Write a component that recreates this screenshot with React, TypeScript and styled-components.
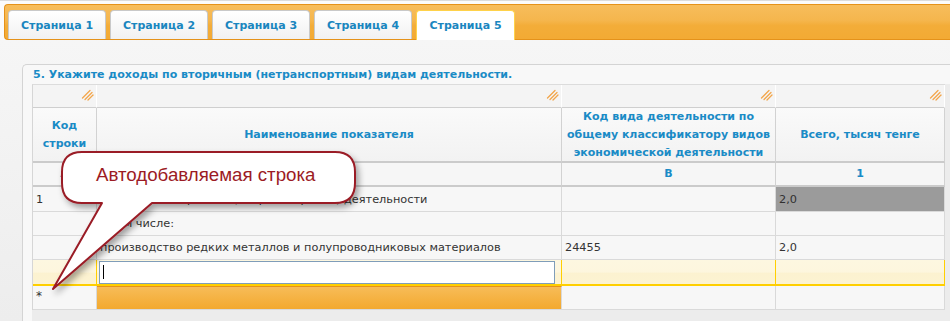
import React from 'react';
import styled, { createGlobalStyle, css } from 'styled-components';

const GlobalStyle = createGlobalStyle`
    html, body {
        margin: 0;
        padding: 0;
        background: #efefef;
    }
    body {
        font-family: 'DejaVu Sans', Verdana, sans-serif;
    }
`;

const Page = styled.div`
    position: relative;
    width: 950px;
    height: 321px;
    overflow: hidden;
    display: flex;
    flex-direction: column;
    background: #fbfbfb;
    border-top: 1px solid #dcdcdc;
    box-sizing: border-box;
`;

const TabBar = styled.div`
    margin: 3px 0 0 4px;
    height: 36px;
    box-sizing: border-box;
    display: flex;
    align-items: flex-end;
    gap: 4px;
    padding-left: 3px;
    border: 1px solid #e5921a;
    border-right: none;
    border-radius: 4px 0 0 4px;
    background: linear-gradient(#f7bd5c 0%, #f5b64d 45%, #f3ad39 60%, #f3aa34 100%);
`;

const Tab = styled.div<{ $active?: boolean }>`
    width: ${(p) => (p.$active ? '99px' : '98px')};
    height: ${(p) => (p.$active ? '30px' : '29px')};
    margin-bottom: ${(p) => (p.$active ? '-1px' : '0')};
    box-sizing: border-box;
    display: flex;
    align-items: center;
    justify-content: center;
    border: 1px solid #c9c9c9;
    border-bottom: none;
    border-radius: 4px 4px 0 0;
    background: linear-gradient(#ffffff, #f1f1f1);
    color: #1a86bf;
    font-size: 11px;
    font-weight: bold;
    ${(p) =>
        p.$active &&
        css`
            border-color: #ffd24a;
            background: #ffffff;
        `}
`;

const Body = styled.div`
    flex: 1;
    display: flex;
    padding: 24px 0 0 22px;
    background: linear-gradient(#f6f6f6, #ededed);
`;

const Panel = styled.div`
    flex: 1;
    display: flex;
    flex-direction: column;
    padding-left: 9px;
    border-left: 1px solid #d4d4d4;
    border-top: 1px solid #d4d4d4;
    border-top-left-radius: 5px;
    background: #f8f8f8;
`;

const Title = styled.div`
    height: 19px;
    line-height: 19px;
    padding-left: 1px;
    color: #1a8bc6;
    font-size: 11px;
    font-weight: bold;
    white-space: nowrap;
`;

const GridWrap = styled.div`
    flex: 1;
    background: #ececec;
`;

const Grid = styled.div`
    display: grid;
    width: 913px;
    box-sizing: border-box;
    grid-template-columns: 64px 465px 214px 169px;
    grid-template-rows: 23px 55px 24px 25px 24px 24px 26px 24px;
    border-left: 1px solid #d6d6d6;
    border-top: 1px solid #dcdcdc;
`;

const GripCell = styled.div`
    display: flex;
    align-items: flex-start;
    justify-content: flex-end;
    padding: 3px 2px 0 0;
    border-right: 1px solid #ffffff;
    border-bottom: 1px solid #cfcfcf;
    background: #f4f4f4;
`;

const HeadCell = styled.div`
    display: flex;
    align-items: center;
    justify-content: center;
    text-align: center;
    padding: 0 4px;
    border-right: 1px solid #d2d2d2;
    border-bottom: 2px solid #cbcbcb;
    background: linear-gradient(#fafafa, #f2f2f2);
    color: #1a8bc6;
    font-size: 11px;
    font-weight: bold;
    line-height: 18px;
`;

const LetterCell = styled(HeadCell)`
    background: #f6f6f6;
`;

type Tone = 'plain' | 'gray' | 'fresh' | 'orange';

const DataCell = styled.div<{ $tone?: Tone }>`
    display: flex;
    align-items: center;
    padding-left: 3px;
    border-right: 1px solid #d9d9d9;
    border-bottom: 1px solid #dadada;
    background: #f7f7f7;
    color: #333333;
    font-size: 11.3px;
    white-space: nowrap;
    overflow: hidden;
    ${(p) =>
        p.$tone === 'gray' &&
        css`
            background: #9b9b9b;
            color: #303030;
        `}
    ${(p) =>
        p.$tone === 'fresh' &&
        css`
            border-right-color: #ffcf00;
            border-bottom: 2px solid #ffcf00;
            background: linear-gradient(#fdf7e0 0%, #fdf6de 50%, #fcf2d0 55%, #fcf3d2 100%);
            padding: 0 6px 0 2px;
        `}
    ${(p) =>
        p.$tone === 'orange' &&
        css`
            border-top: 1px solid #e5921a;
            background: linear-gradient(#f7bc58, #f3a92f);
        `}
`;

const StarCell = styled(DataCell)`
    align-items: flex-start;
    padding-top: 3px;
    font-size: 12px;
`;

const FakeInput = styled.div`
    flex: 1;
    height: 23px;
    box-sizing: border-box;
    display: flex;
    align-items: center;
    padding-left: 3px;
    border: 1px solid #7f9db9;
    background: #ffffff;
`;

const Caret = styled.span`
    width: 1px;
    height: 14px;
    background: #000000;
`;

const CalloutBox = styled.div`
    position: absolute;
    left: 45px;
    top: 140px;
    width: 330px;
    height: 160px;
`;

const CalloutText = styled.span`
    position: absolute;
    left: 51px;
    top: 23px;
    color: #9c1b24;
    font-family: 'Liberation Sans', Arial, sans-serif;
    font-size: 18.7px;
    white-space: nowrap;
`;

const Grip = () => (
    <svg width="13" height="13" viewBox="0 0 13 13">
        <g stroke="#f2a54a" strokeWidth="1.3" strokeLinecap="round">
            <line x1="1.5" y1="10" x2="9" y2="2.5" />
            <line x1="4" y1="11.5" x2="11" y2="4.5" />
            <line x1="7" y1="12" x2="12" y2="7" />
        </g>
    </svg>
);

const Callout = () => (
    <CalloutBox>
        <svg width="330" height="160" viewBox="0 0 330 160">
            <defs>
                <filter id="cs" x="-10%" y="-10%" width="130%" height="130%">
                    <feDropShadow dx="3" dy="4" stdDeviation="3" floodColor="#000" floodOpacity="0.35" />
                </filter>
            </defs>
            <path
                d="M 37 11 H 290 Q 310 11 310 31 V 42 Q 310 62 290 62 H 107 L 8 148 L 57 62 H 37 Q 17 62 17 42 V 31 Q 17 11 37 11 Z"
                fill="#ffffff"
                stroke="#9a1c25"
                strokeWidth="2"
                strokeLinejoin="round"
                filter="url(#cs)"
            />
        </svg>
        <CalloutText>Автодобавляемая строка</CalloutText>
    </CalloutBox>
);

const tabs = ['Страница 1', 'Страница 2', 'Страница 3', 'Страница 4', 'Страница 5'];

export default function App() {
    return (
        <>
            <GlobalStyle />
            <Page>
                <TabBar>
                    {tabs.map((t, i) => (
                        <Tab key={t} $active={i === tabs.length - 1}>
                            {t}
                        </Tab>
                    ))}
                </TabBar>
                <Body>
                    <Panel>
                        <Title>5. Укажите доходы по вторичным (нетранспортным) видам деятельности.</Title>
                        <GridWrap>
                            <Grid>
                                <GripCell><Grip /></GripCell>
                                <GripCell><Grip /></GripCell>
                                <GripCell><Grip /></GripCell>
                                <GripCell><Grip /></GripCell>

                                <HeadCell>Код строки</HeadCell>
                                <HeadCell>Наименование показателя</HeadCell>
                                <HeadCell>Код вида деятельности по общему классификатору видов экономической деятельности</HeadCell>
                                <HeadCell>Всего, тысяч тенге</HeadCell>

                                <LetterCell>А</LetterCell>
                                <LetterCell>Б</LetterCell>
                                <LetterCell>В</LetterCell>
                                <LetterCell>1</LetterCell>

                                <DataCell>1</DataCell>
                                <DataCell>Доходы от вторичной (нетранспортной) деятельности</DataCell>
                                <DataCell />
                                <DataCell $tone="gray">2,0</DataCell>

                                <DataCell />
                                <DataCell>в том числе:</DataCell>
                                <DataCell />
                                <DataCell />

                                <DataCell />
                                <DataCell>производство редких металлов и полупроводниковых материалов</DataCell>
                                <DataCell>24455</DataCell>
                                <DataCell>2,0</DataCell>

                                <DataCell $tone="fresh" />
                                <DataCell $tone="fresh">
                                    <FakeInput>
                                        <Caret />
                                    </FakeInput>
                                </DataCell>
                                <DataCell $tone="fresh" />
                                <DataCell $tone="fresh" />

                                <StarCell>*</StarCell>
                                <DataCell $tone="orange" />
                                <DataCell />
                                <DataCell />
                            </Grid>
                        </GridWrap>
                    </Panel>
                </Body>
                <Callout />
            </Page>
        </>
    );
}
